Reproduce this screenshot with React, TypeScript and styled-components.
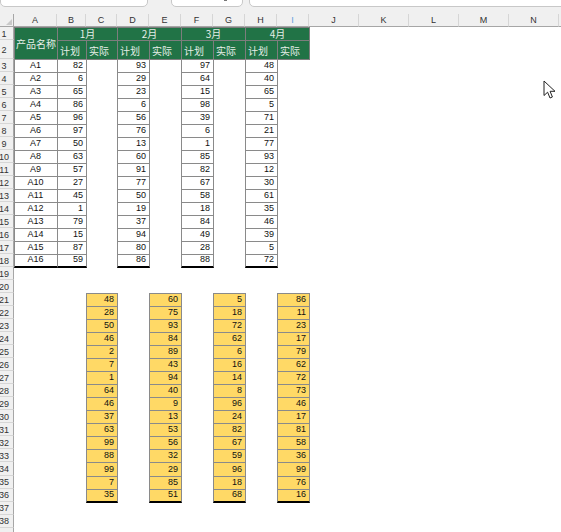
import styled, { createGlobalStyle } from "styled-components"

const GlobalStyle = createGlobalStyle`
  * { box-sizing: border-box; }
  body {
    margin: 0;
    background: #fff;
    font-family: "Liberation Sans", "Noto Sans CJK SC", sans-serif;
  }
`

const LETTERS = ["A", "B", "C", "D", "E", "F", "G", "H", "I", "J", "K", "L", "M", "N", ""]
const WIDTHS = [43, 29, 31, 32, 32, 32, 32, 32, 32, 50, 50, 50, 50, 50, 50]
const ROW_COUNT = 39
const LAST_LABELLED_ROW = 38

const plan = [
  [82, 93, 97, 48], [6, 29, 64, 40], [65, 23, 15, 65], [86, 6, 98, 5],
  [96, 56, 39, 71], [97, 76, 6, 21], [50, 13, 1, 77], [63, 60, 85, 93],
  [57, 91, 82, 12], [27, 77, 67, 30], [45, 50, 58, 61], [1, 19, 18, 35],
  [79, 37, 84, 46], [15, 94, 49, 39], [87, 80, 28, 5], [59, 86, 88, 72],
]

const actual = [
  [48, 60, 5, 86], [28, 75, 18, 11], [50, 93, 72, 23], [46, 84, 62, 17],
  [2, 89, 6, 79], [7, 43, 16, 62], [1, 94, 14, 72], [64, 40, 8, 73],
  [46, 9, 96, 46], [37, 13, 24, 17], [63, 53, 82, 81], [99, 56, 67, 58],
  [88, 32, 59, 36], [99, 29, 96, 99], [7, 85, 18, 76], [35, 51, 68, 16],
]

const Window = styled.div`
  position: relative;
  width: 561px;
  height: 532px;
  overflow: hidden;
  background: #fff;
`

const TopBar = styled.div`
  display: flex;
  height: 14px;
  background: #f0f0f0;
  overflow: hidden;
`

const InputBox = styled.div<{ $width?: number; $gap?: number }>`
  position: relative;
  flex: ${(p) => (p.$width ? `0 0 ${p.$width}px` : "1 0 auto")};
  height: 20px;
  margin-top: -13px;
  margin-left: ${(p) => p.$gap ?? 0}px;
  margin-right: ${(p) => (p.$width ? 0 : -10)}px;
  background: #fff;
  border: 1px solid #c8c8c8;
  border-radius: 5px;
`

const DropMark = styled.span`
  position: absolute;
  right: 15px;
  bottom: 5px;
  width: 3px;
  height: 2px;
  background: #777;
`

const Sheet = styled.div`
  display: grid;
  grid-template-columns: 14px ${WIDTHS.map((w) => `${w}px`).join(" ")};
  grid-template-rows: 13px 13px 19px repeat(${ROW_COUNT - 2}, 13.03px);
  background: #fff;
  font-size: 9px;
`

const Corner = styled.div`
  grid-column: 1;
  grid-row: 1;
  position: relative;
  background: #f0f0f0;
  border-right: 1px solid #a6a6a6;
  border-bottom: 1px solid #a6a6a6;
  &::after {
    content: "";
    position: absolute;
    right: 1px;
    bottom: 1px;
    border-left: 6px solid transparent;
    border-bottom: 6px solid #c9c9c9;
  }
`

const ColHead = styled.div<{ $col: number; $active?: boolean }>`
  grid-column: ${(p) => p.$col + 1};
  grid-row: 1;
  display: flex;
  align-items: center;
  justify-content: center;
  background: #f0f0f0;
  border-right: 1px solid #d6d6d6;
  border-bottom: 1px solid #a6a6a6;
  color: ${(p) => (p.$active ? "#5c9fe0" : "#333")};
  font-size: 9px;
`

const RowHead = styled.div<{ $row: number }>`
  grid-column: 1;
  grid-row: ${(p) => p.$row + 1};
  display: flex;
  align-items: center;
  justify-content: center;
  padding: 1px 5px 0 0;
  background: #f0f0f0;
  border-right: 1px solid #a6a6a6;
  border-bottom: 1px solid #d6d6d6;
  color: #333;
  font-size: 9px;
  white-space: nowrap;
`

const HeadCell = styled.div<{
  $col: number
  $row: number
  $colSpan?: number
  $rowSpan?: number
  $align?: "left" | "center"
}>`
  grid-column: ${(p) => p.$col + 1} / span ${(p) => p.$colSpan ?? 1};
  grid-row: ${(p) => p.$row + 1} / span ${(p) => p.$rowSpan ?? 1};
  margin: 0 -1px -1px 0;
  display: flex;
  align-items: ${(p) => (p.$row === 2 ? "flex-end" : "center")};
  justify-content: ${(p) => (p.$align === "left" ? "flex-start" : "center")};
  padding: ${(p) => (p.$row === 2 ? "0 0 2px 2px" : "0")};
  background: #217346;
  border: 1px solid #7d7d7d;
  color: #e6eee8;
  font-family: "Noto Sans CJK SC", "Liberation Sans", sans-serif;
  font-size: 10px;
  line-height: 12px;
  white-space: nowrap;
`

const DataCell = styled.div<{
  $col: number
  $row: number
  $fill?: "white" | "gold"
  $align?: "right" | "center"
  $last?: boolean
}>`
  grid-column: ${(p) => p.$col + 1};
  grid-row: ${(p) => p.$row + 1};
  margin: 0 -1px -1px 0;
  display: flex;
  align-items: flex-end;
  justify-content: ${(p) => (p.$align === "center" ? "center" : "flex-end")};
  padding: 0 3px 1px 2px;
  background: ${(p) => (p.$fill === "gold" ? "#ffd966" : "#fff")};
  border: 1px solid #8a8a8a;
  border-bottom: ${(p) => (p.$last ? "2px solid #000" : "1px solid #8a8a8a")};
  color: #111;
  font-size: 9px;
  line-height: 11px;
`

const Cursor = styled.svg`
  position: absolute;
  left: 543px;
  top: 80px;
`

function App() {
  const monthCols = [2, 4, 6, 8]
  return (
    <Window>
      <GlobalStyle />
      <TopBar>
        <InputBox $width={148} />
        <InputBox $width={72} $gap={23}>
          <DropMark />
        </InputBox>
        <InputBox $gap={6} />
      </TopBar>
      <Sheet>
        <Corner />
        {LETTERS.map((l, i) => (
          <ColHead key={i} $col={i + 1} $active={l === "I"}>
            {l}
          </ColHead>
        ))}
        {Array.from({ length: ROW_COUNT }, (_, i) => (
          <RowHead key={i} $row={i + 1}>
            {i + 1 <= LAST_LABELLED_ROW ? i + 1 : ""}
          </RowHead>
        ))}

        <HeadCell $col={1} $row={1} $rowSpan={2}>产品名称</HeadCell>
        {monthCols.map((c, m) => (
          <HeadCell key={`m${c}`} $col={c} $row={1} $colSpan={2}>
            {m + 1}月
          </HeadCell>
        ))}
        {monthCols.map((c) => [
          <HeadCell key={`p${c}`} $col={c} $row={2} $align="left">计划</HeadCell>,
          <HeadCell key={`a${c}`} $col={c + 1} $row={2} $align="left">实际</HeadCell>,
        ])}

        {plan.map((vals, r) => [
          <DataCell key={`n${r}`} $col={1} $row={r + 3} $align="center" $last={r === 15}>
            A{r + 1}
          </DataCell>,
          ...vals.map((v, m) => (
            <DataCell key={`v${r}-${m}`} $col={monthCols[m]} $row={r + 3} $last={r === 15}>
              {v}
            </DataCell>
          )),
        ])}

        {actual.map((vals, r) =>
          vals.map((v, m) => (
            <DataCell key={`y${r}-${m}`} $col={monthCols[m] + 1} $row={r + 21} $fill="gold" $last={r === 15}>
              {v}
            </DataCell>
          ))
        )}
      </Sheet>
      <Cursor width="14" height="20" viewBox="0 0 14 20">
        <path
          d="M1 1 L1 15.5 L4.6 12.2 L7 18 L9.4 17 L7.1 11.3 L12 11.3 Z"
          fill="#fff"
          stroke="#222"
          strokeWidth="1"
          strokeLinejoin="round"
        />
      </Cursor>
    </Window>
  )
}

export default App
